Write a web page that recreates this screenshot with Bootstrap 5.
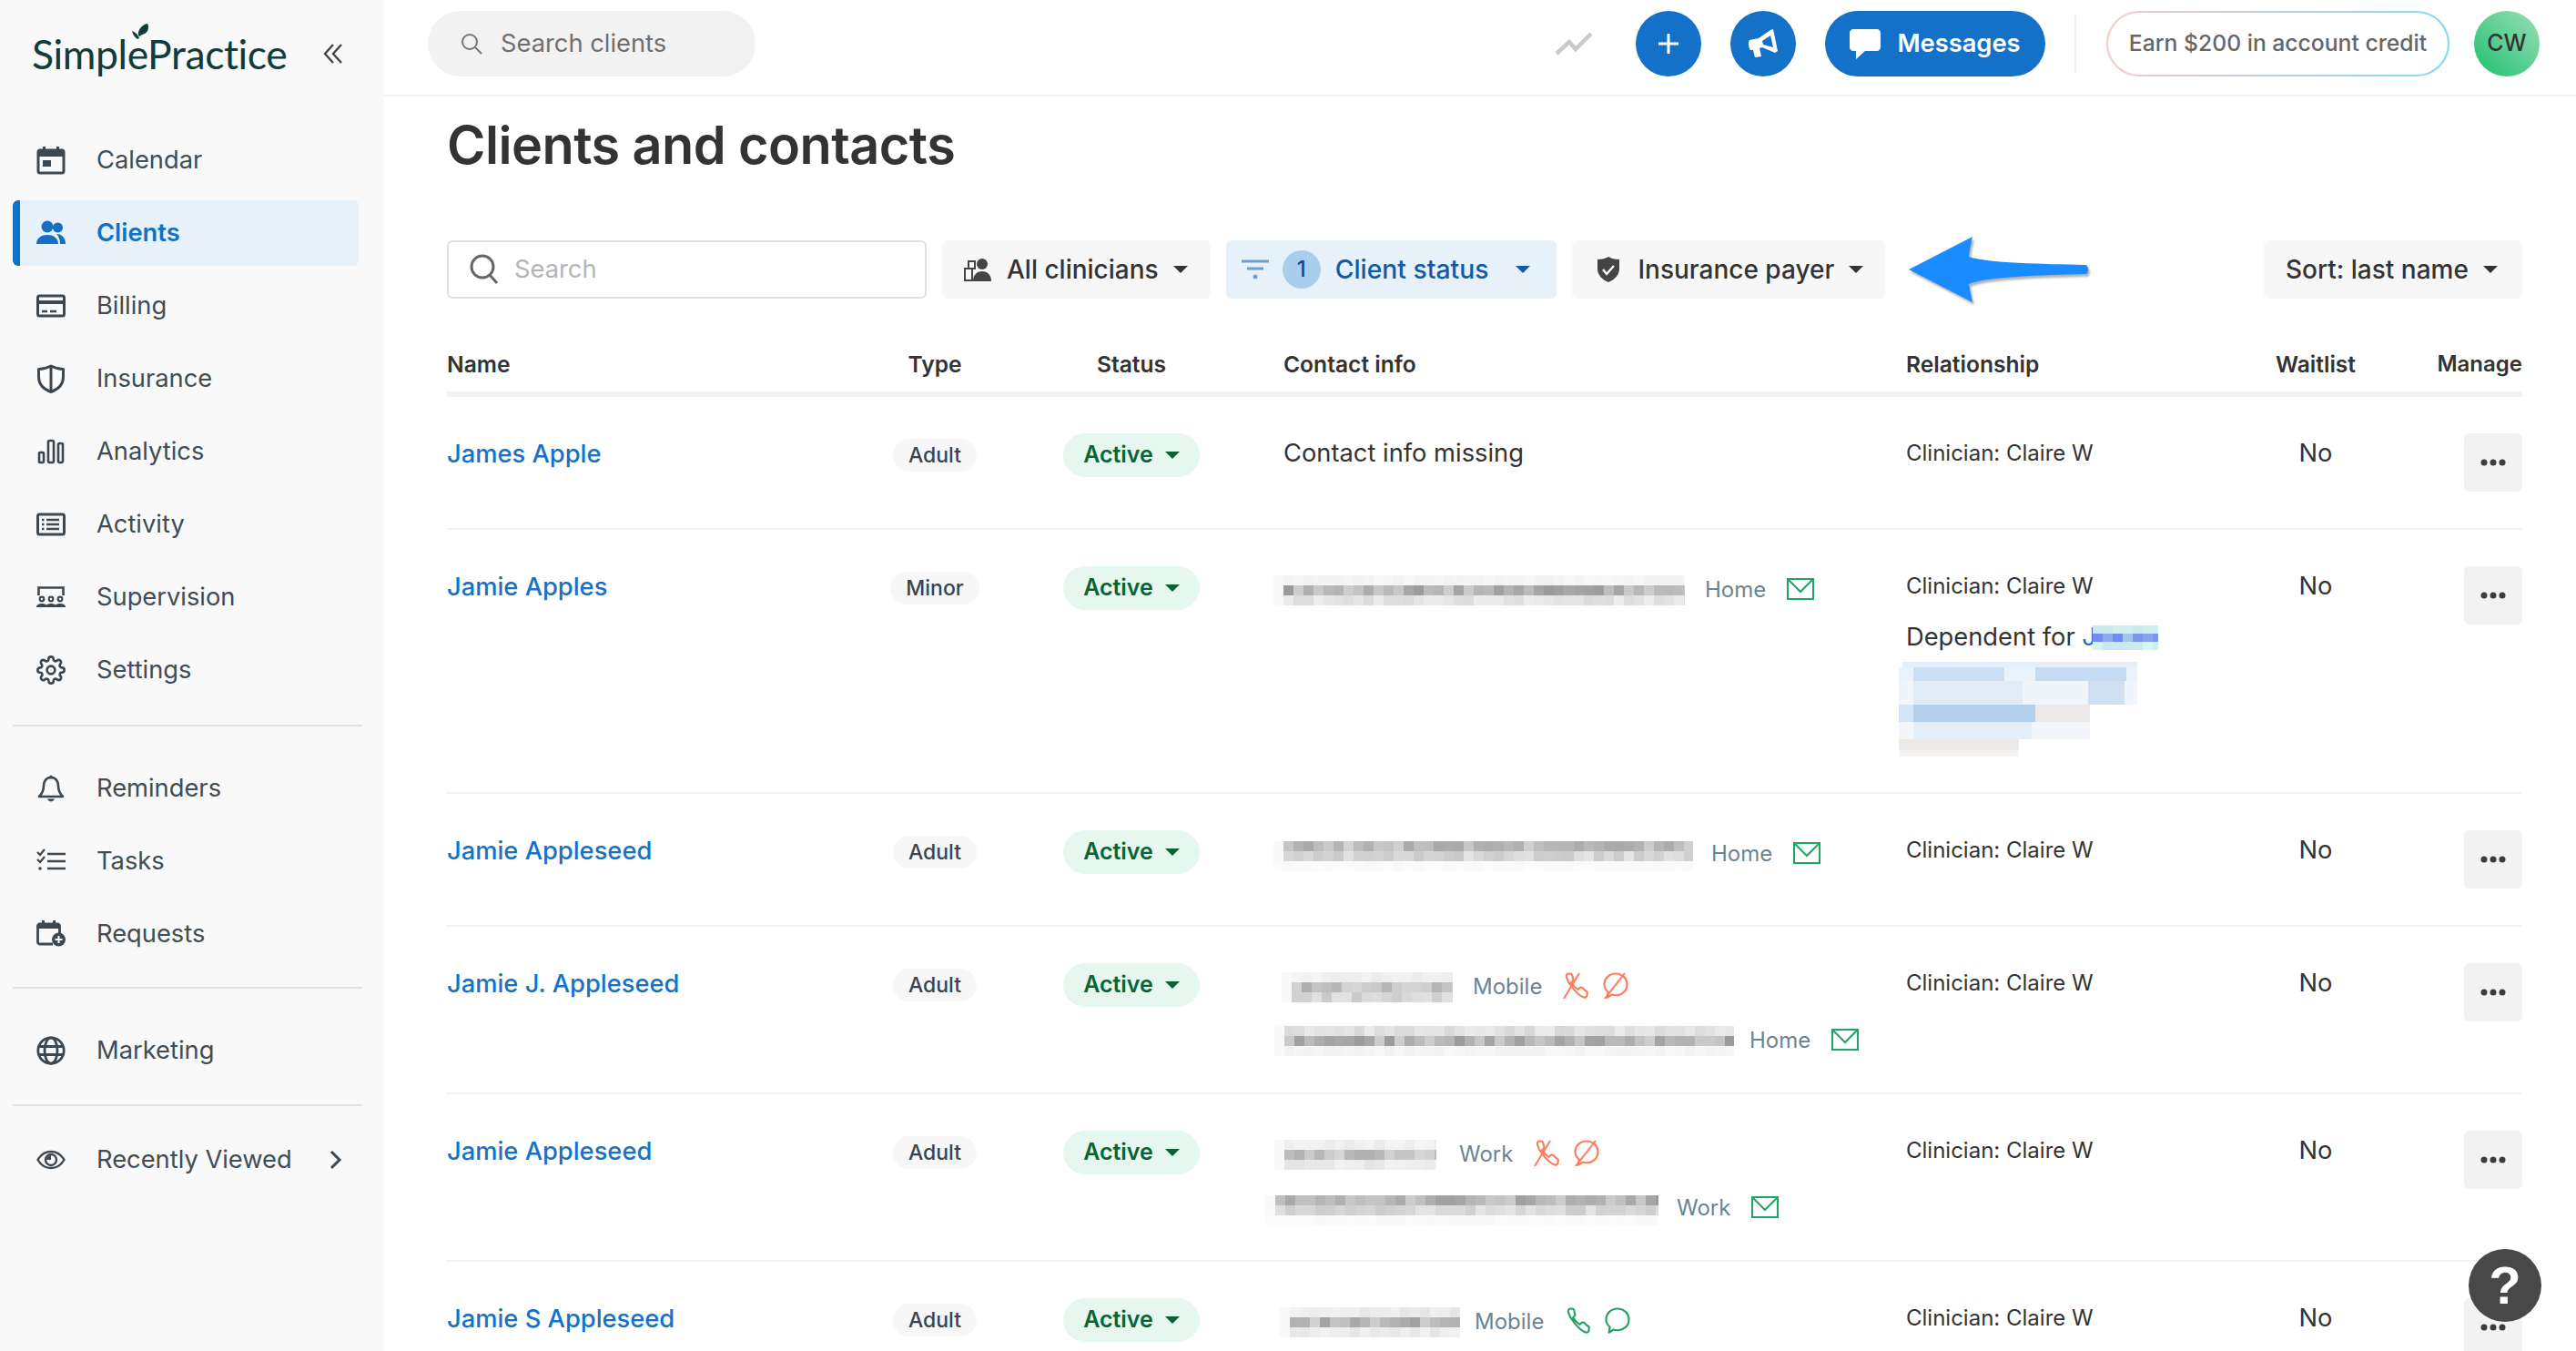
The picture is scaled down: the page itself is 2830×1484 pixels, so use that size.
<!DOCTYPE html>
<html lang="en">
<head>
<meta charset="utf-8">
<title>Clients and contacts</title>
<link href="https://cdn.jsdelivr.net/npm/bootstrap@5.3.0/dist/css/bootstrap.min.css" rel="stylesheet">
<style>
html,body{height:100%;overflow:hidden;background:#fff}
body{font-family:Inter,"Liberation Sans",sans-serif;color:#333;font-size:27.3px}
.shell{height:1484px}
.side{width:422px;flex:none;background:#f9f9f9;height:100%}
.brand{height:140px;padding:0 45px 22px 35px}
.brand-txt{font-family:Lato,sans-serif;font-size:44.5px;color:#123c3c;letter-spacing:-.4px;line-height:1;position:relative;font-weight:400}
.brand-leaf{position:absolute;left:110px;top:-11px;width:20px;height:20px}
.sidenav .nav-link{height:72px;margin:4px 28px 4px 14px;padding:0 0 0 18px;color:#414c54;display:flex;align-items:center;font-size:27.3px;border-left:8px solid transparent;border-radius:6px}
.sidenav .nav-link svg{width:32px;height:32px;flex:none;margin-right:34px;color:#3d474f}
.sidenav .nav-link.on{background:#e6f1fa;color:#1470c4;border-left-color:#1470c4;font-weight:600}
.sidenav .nav-link.on svg{color:#1470c4}
.sidenav .first{margin-top:0}
.rule{height:2px;background:#e2e2e2;margin:20px 24px 28px 14px}
.rule.mid{margin-top:18px;margin-bottom:28px}
.rule.tail{margin-bottom:19px;margin-top:19px}
.topbar{height:106px;border-bottom:2px solid #f2f2f2;padding:0 40px 8px 48px;flex:none}
.tsearch{width:360px;height:72px;background:#f2f2f2;border-radius:36px;padding-left:36px;color:#6f6f6f;font-size:27.3px}
.tsearch svg{width:24px;height:24px;margin-right:20px}
.round-b{width:72px;height:72px;border-radius:50%;background:#1471c8;color:#fff;padding:0;display:flex;align-items:center;justify-content:center;border:0}
.msg-b{height:72px;width:242px;border-radius:36px;background:#1471c8;color:#fff;font-size:27.3px;font-weight:600;border:0;padding:0;display:flex;align-items:center;justify-content:center;gap:18px}
.vr-line{width:2px;height:64px;background:#f0f0f0;margin:0 33px 0 32px}
.earn{height:72px;width:377px;border-radius:36px;border:2px solid transparent;background:linear-gradient(#fff,#fff) padding-box,linear-gradient(90deg,#f9c7ca,#7fd8f2) border-box;color:#666;font-size:24.7px;font-weight:500;padding:0;display:flex;align-items:center;justify-content:center}
.avatar{width:72px;height:72px;border-radius:50%;background:linear-gradient(45deg,#1fc06f,#9adfb8);font-size:25px;font-weight:500;color:#333;margin-left:27px}
.page{padding:0 59px 0 69px;overflow:hidden;flex:1}
.ttl{font-size:57.6px;font-weight:600;line-height:70px;margin:18px 0 70px;color:#333;letter-spacing:-.55px}
.filters{height:64px;gap:17px}
.fsearch{width:527px;height:64px;border:2px solid #e0e0e0;border-radius:6px;color:#b5b5b5;font-size:27.3px;padding-left:22px}
.fsearch svg{width:34px;height:34px;margin-right:16px;color:#666}
.fbtn{height:64px;background:#f7f7f7;border:0;border-radius:6px;font-size:28px;font-weight:500;color:#333;padding:0 24px;display:flex;align-items:center}
.fbtn.dropdown-toggle::after{margin-left:16px;vertical-align:0}
.fbtn svg{flex:none}
.fbtn.hot{background:#e6f1fa;color:#0f5ba6;padding:0 29px 0 16px;font-size:28.3px}
.cnt{width:42px;height:42px;border-radius:50%;background:#a9cdec;font-size:24px;color:#0f4f8f;margin:0 16px 0 14px;font-weight:500}
.arrow{width:200px;height:76px;margin:-6px 0 -6px 9px;filter:drop-shadow(2px 3px 1px rgba(0,0,0,.3))}
.fbtn.srt{padding:0 24px 0 24px;width:284px}
.grid{table-layout:fixed;width:2280px;margin:0;margin-top:42px;border-collapse:separate;border-spacing:0}
.grid th{font-size:24.6px;font-weight:600;color:#333;padding:0;height:66px;vertical-align:middle;border-bottom:6px solid #f2f2f2;background:none}
.grid th.text-end{font-size:24px}
.grid td{padding:40px 0;vertical-align:top;border-bottom:2px solid #f2f2f2;background:none;color:#333}
.grid td.ct{padding-bottom:37px;padding-left:18px}
.grid th.ct{padding-left:18px}
.who{display:block;font-size:27.3px;font-weight:500;line-height:46px;color:#1671c9;text-decoration:none}
.kind{background:#f7f7f7;color:#3a444c;font-size:23px;font-weight:500;border-radius:18px;height:36px;padding:0 17px;display:inline-flex;align-items:center;margin-top:6px}
.state{background:#e6f7ef;color:#0b6334;font-size:25px;font-weight:600;height:48px;width:150px;border-radius:24px;border:0;padding:0;display:inline-flex;align-items:center;justify-content:center}
.state.dropdown-toggle::after{margin-left:13px;border-top-width:8px;border-left-width:8px;border-right-width:8px}
.rel{font-size:24px;line-height:44px;color:#333}
.dep{font-size:27.3px;line-height:44px;margin-top:12px;white-space:nowrap}
.dep a{color:#1671c9;text-decoration:none}
.no{font-size:27.3px;line-height:44px}
.more{width:64px;height:64px;background:#f2f2f2;border:0;border-radius:6px;padding:0;display:inline-flex;align-items:center;justify-content:center}
.missing{font-size:27.3px;line-height:44px}
.cline{height:40px;margin-top:6px;white-space:nowrap}
.cline+.cline{margin-top:19px}
.lbl{font-size:24px;color:#6c8394;margin-left:22px}
.ic-g{color:#1fa463;width:30px;height:24px;margin:-2px 0 0 23px;flex:none}
.ph{width:30px;height:30px;flex:none;margin-top:-4px}
.ph.a{margin-left:22px}.ph.b{margin-left:14px}
.ok{color:#1fa463}.bad{color:#ff7a59}
.blurbox{display:block;flex:none}
.help{position:fixed;left:2712px;top:1372px;width:80px;height:80px;border-radius:50%;background:#484848;color:#fff;font:700 58px/80px "Liberation Sans",sans-serif;text-align:center;padding:0;border:0}
</style>
</head>
<body>
<svg width="0" height="0" class="position-absolute">
<defs>
<symbol id="i-cal" viewBox="0 0 32 32"><rect x="2" y="5" width="28" height="25" rx="2" fill="none" stroke="currentColor" stroke-width="3"/><rect x="2" y="5" width="28" height="7" fill="currentColor"/><rect x="7" y="1" width="3" height="6" fill="currentColor"/><rect x="22" y="1" width="3" height="6" fill="currentColor"/><rect x="7" y="16" width="9" height="7" fill="currentColor"/></symbol>
<symbol id="i-ppl" viewBox="0 0 32 32"><circle cx="12" cy="9" r="6.5" fill="currentColor"/><circle cx="23.5" cy="10" r="5.5" fill="currentColor"/><path d="M0 28c0-7 6-10 12-10s12 3 12 10z" fill="currentColor"/><path d="M22 17c6 0 10 4 10 11h-6c0-4-1-8-4-11z" fill="currentColor"/></symbol>
<symbol id="i-card" viewBox="0 0 32 32"><rect x="1.5" y="5" width="29" height="22" rx="2" fill="none" stroke="currentColor" stroke-width="3"/><rect x="1.5" y="10" width="29" height="4" fill="currentColor"/><path d="M6 22h6M15 22h7" stroke="currentColor" stroke-width="2.5"/></symbol>
<symbol id="i-shield" viewBox="0 0 32 32"><path d="M16 2C12 4 7 5.500 2.500 5.500V14C2.500 23 9 28 16 30.500C23 28 29.500 23 29.500 14V5.500C25 5.500 20 4 16 2Z" fill="none" stroke="currentColor" stroke-width="3" stroke-linejoin="round"/><path d="M16 2v28" stroke="currentColor" stroke-width="3"/></symbol>
<symbol id="i-bars" viewBox="0 0 32 32"><g fill="none" stroke="currentColor" stroke-width="2.6"><rect x="3" y="17" width="5" height="11" rx="1"/><rect x="13" y="4" width="6" height="24" rx="1.500"/><rect x="24" y="7" width="5" height="21" rx="1.500"/></g></symbol>
<symbol id="i-list" viewBox="0 0 32 32"><rect x="1.500" y="5" width="29" height="22" rx="2" fill="none" stroke="currentColor" stroke-width="3"/><path d="M11 11h14M11 16h14M11 21h14" stroke="currentColor" stroke-width="2.5"/><path d="M6 11h2.500M6 16h2.500M6 21h2.500" stroke="currentColor" stroke-width="2.5"/></symbol>
<symbol id="i-sup" viewBox="0 0 32 32"><path d="M2.500 14V5.500h27V14" fill="none" stroke="currentColor" stroke-width="2.6"/><g fill="none" stroke="currentColor" stroke-width="2.2"><circle cx="6" cy="18" r="2.300"/><circle cx="16" cy="18" r="2.300"/><circle cx="26" cy="18" r="2.300"/></g><path d="M0 27c0-3 3-4 6-4s6 1 6 4zM10 27c0-3 3-4 6-4s6 1 6 4zM20 27c0-3 3-4 6-4s6 1 6 4z" fill="currentColor"/></symbol>
<symbol id="i-gear" viewBox="0 0 24 24"><path fill="none" stroke="currentColor" stroke-width="2" d="M19.400 15a1.650 1.650 0 0 0 .33 1.820l.06.06a2 2 0 0 1 0 2.830 2 2 0 0 1-2.830 0l-.06-.06a1.650 1.650 0 0 0-1.820-.33 1.650 1.650 0 0 0-1 1.510V21a2 2 0 0 1-2 2 2 2 0 0 1-2-2v-.09A1.650 1.650 0 0 0 9 19.400a1.650 1.650 0 0 0-1.820.33l-.06.06a2 2 0 0 1-2.830 0 2 2 0 0 1 0-2.830l.06-.06a1.650 1.650 0 0 0 .33-1.820 1.650 1.650 0 0 0-1.510-1H3a2 2 0 0 1-2-2 2 2 0 0 1 2-2h.09A1.650 1.650 0 0 0 4.600 9a1.650 1.650 0 0 0-.33-1.820l-.06-.06a2 2 0 0 1 0-2.830 2 2 0 0 1 2.830 0l.06.06a1.650 1.650 0 0 0 1.820.33H9a1.650 1.650 0 0 0 1-1.510V3a2 2 0 0 1 2-2 2 2 0 0 1 2 2v.09a1.650 1.650 0 0 0 1 1.510 1.650 1.650 0 0 0 1.820-.33l.06-.06a2 2 0 0 1 2.830 0 2 2 0 0 1 0 2.830l-.06.06a1.650 1.650 0 0 0-.33 1.820V9a1.650 1.650 0 0 0 1.510 1H21a2 2 0 0 1 2 2 2 2 0 0 1-2 2h-.09a1.650 1.650 0 0 0-1.510 1z"/><circle cx="12" cy="12" r="3.300" fill="none" stroke="currentColor" stroke-width="2"/></symbol>
<symbol id="i-bell" viewBox="0 0 32 32"><path d="M16 4c-5 0-8 4-8 9 0 6-2 9-5 12h26c-3-3-5-6-5-12 0-5-3-9-8-9z" fill="none" stroke="currentColor" stroke-width="2.6" stroke-linejoin="round"/><path d="M12 27.500c1 2 2.500 3 4 3s3-1 4-3z" fill="currentColor"/><rect x="14.500" y="1.500" width="3" height="4" rx="1.500" fill="currentColor"/></symbol>
<symbol id="i-tasks" viewBox="0 0 32 32"><path d="M12 8h20M12 16h20M12 24h20" stroke="currentColor" stroke-width="2.4"/><path d="M1 6l3 3 5-6M1 14l3 3 5-6" fill="none" stroke="currentColor" stroke-width="2.2"/><circle cx="4" cy="24" r="1.800" fill="currentColor"/></symbol>
<symbol id="i-calp" viewBox="0 0 32 32"><path d="M18 27H3.500c-1 0-2-1-2-2V7c0-1 1-2 2-2h20c1 0 2 1 2 2v9" fill="none" stroke="currentColor" stroke-width="2.8"/><rect x="2" y="5" width="23" height="5" fill="currentColor"/><rect x="6" y="1" width="3" height="5" fill="currentColor"/><rect x="18" y="1" width="3" height="5" fill="currentColor"/><circle cx="24.500" cy="22" r="7.500" fill="currentColor"/><path d="M24.500 18v8M20.500 22h8" stroke="#fff" stroke-width="2"/></symbol>
<symbol id="i-globe" viewBox="0 0 32 32"><g fill="none" stroke="currentColor" stroke-width="2.8"><circle cx="16" cy="16" r="14.200"/><ellipse cx="16" cy="16" rx="7" ry="14.200"/><path d="M2 11.500h28M2 20.500h28"/></g></symbol>
<symbol id="i-eye" viewBox="0 0 32 32"><path d="M1.500 16C5 10 10 7 16 7s11 3 14.500 9C27 22 22 25 16 25S5 22 1.500 16Z" fill="none" stroke="currentColor" stroke-width="2.4"/><circle cx="16" cy="16" r="6" fill="none" stroke="currentColor" stroke-width="2.4"/><path d="M16 11a5 5 0 0 0-5 5h5z" fill="currentColor"/></symbol>
<symbol id="i-mail" viewBox="0 0 30 24"><path d="M1 1h28v22H1zM1 1l14 14L29 1" fill="none" stroke="currentColor" stroke-width="2"/></symbol>
<symbol id="i-phone" viewBox="0 0 24 24"><path fill="none" stroke="currentColor" stroke-width="1.700" d="M22 19.900v1a2 2 0 0 1-2.180 2c-2 -.2 -3.500-1-6.630-4.070-2.500-2.500-5-5.500-7-8.600C5 8 4 6 3.900 4.200A2 2 0 0 1 6.100 2h1a2 2 0 0 1 2 1.720c.2 1 .3 2 .7 2.810a2 2 0 0 1-.45 2.110L8.090 9.910a16 16 0 0 0 6 6l1.270-1.270a2 2 0 0 1 2.110-.45c1 .4 1.800 1.500 3 2.700A2 2 0 0 1 22 19.900z"/></symbol>
<symbol id="i-chat" viewBox="0 0 24 24"><path fill="none" stroke="currentColor" stroke-width="1.700" stroke-linejoin="round" d="M12 2c5.500 0 10 4 10 9.500S17.500 21 12 21c-1.500 0-2.500-.2-3.500-.6L4.500 23l.8-5C3.300 16.300 2 14 2 11.500 2 6 6.500 2 12 2z"/></symbol>
</defs>
</svg>

<div class="shell d-flex">
<aside class="side d-flex flex-column">
  <div class="brand d-flex align-items-center justify-content-between">
    <span class="brand-txt">SimplePractice<svg class="brand-leaf" viewBox="0 0 20 20"><path d="M7 13C6 7 11 1 17 0c2 3 1 9-3 11-2 1-4 1-5 3z" fill="#123c3c"/><path d="M0 8c3 1 6 3 8 8l-2 1C3 15 1 12 0 8z" fill="#123c3c"/></svg></span>
    <svg width="22" height="24" viewBox="0 0 22 24"><path d="M11 2L2 12l9 10M20 2l-9 10 9 10" fill="none" stroke="#444" stroke-width="2.400"/></svg>
  </div>
  <nav class="sidenav nav flex-column">
    <a class="nav-link first" href="#"><svg><use href="#i-cal"/></svg>Calendar</a>
    <a class="nav-link on" href="#"><svg><use href="#i-ppl"/></svg>Clients</a>
    <a class="nav-link" href="#"><svg><use href="#i-card"/></svg>Billing</a>
    <a class="nav-link" href="#"><svg><use href="#i-shield"/></svg>Insurance</a>
    <a class="nav-link" href="#"><svg><use href="#i-bars"/></svg>Analytics</a>
    <a class="nav-link" href="#"><svg><use href="#i-list"/></svg>Activity</a>
    <a class="nav-link" href="#"><svg><use href="#i-sup"/></svg>Supervision</a>
    <a class="nav-link" href="#"><svg><use href="#i-gear"/></svg>Settings</a>
    <div class="rule"></div>
    <a class="nav-link" href="#"><svg><use href="#i-bell"/></svg>Reminders</a>
    <a class="nav-link" href="#"><svg><use href="#i-tasks"/></svg>Tasks</a>
    <a class="nav-link" href="#"><svg><use href="#i-calp"/></svg>Requests</a>
    <div class="rule mid"></div>
    <a class="nav-link" href="#"><svg><use href="#i-globe"/></svg>Marketing</a>
    <div class="rule tail"></div>
    <a class="nav-link" href="#"><svg><use href="#i-eye"/></svg><span class="flex-grow-1">Recently Viewed</span><svg style="width:14px;height:22px;margin-right:18px" viewBox="0 0 14 22"><path d="M2 2l9 9-9 9" fill="none" stroke="currentColor" stroke-width="3"/></svg></a>
  </nav>
</aside>

<main class="flex-grow-1 d-flex flex-column" style="min-width:0">
  <header class="topbar d-flex align-items-center">
    <div class="tsearch d-flex align-items-center"><svg viewBox="0 0 24 24"><circle cx="10" cy="10" r="8" fill="none" stroke="#777" stroke-width="2"/><path d="M16 16l7 7" stroke="#777" stroke-width="2"/></svg>Search clients</div>
    <svg class="ms-auto" width="42" height="26" viewBox="0 0 42 26" style="margin-right:47px"><path d="M2 24L16 11l7 8L40 2" fill="none" stroke="#c9c9c9" stroke-width="4.500"/></svg>
    <button class="btn round-b" aria-label="Add"><svg width="22" height="22" viewBox="0 0 22 22"><path d="M11 0v22M0 11h22" stroke="#fff" stroke-width="3"/></svg></button>
    <button class="btn round-b" style="margin-left:32px" aria-label="News"><svg width="34" height="32" viewBox="0 0 34 32"><path fill-rule="evenodd" fill="#fff" d="M2 12L12 10L25 1L28 0L33 24L30 26L16 20L13 21L15 30L8 31L6 23L3 23C1 20 0 15 2 12ZM16 13L25 7L28 20L17 17Z"/></svg></button>
    <button class="btn msg-b" style="margin-left:32px"><svg width="34" height="33" viewBox="0 0 34 33"><path d="M4 0h26c2 0 4 2 4 4v16c0 2-2 4-4 4H17L7 33V24H4c-2 0-4-2-4-4V4c0-2 2-4 4-4z" fill="#fff"/></svg>Messages</button>
    <span class="vr-line"></span>
    <button class="btn earn">Earn $200 in account credit</button>
    <div class="avatar d-flex align-items-center justify-content-center">CW</div>
  </header>

  <section class="page">
    <h1 class="ttl">Clients and contacts</h1>
    <div class="filters d-flex align-items-center">
      <div class="fsearch d-flex align-items-center"><svg viewBox="0 0 34 34"><circle cx="15" cy="14" r="12" fill="none" stroke="currentColor" stroke-width="3"/><path d="M23 23l8 9" stroke="currentColor" stroke-width="3"/></svg>Search</div>
      <button class="btn fbtn dropdown-toggle" style="padding-right:25px"><svg width="30" height="26" viewBox="0 0 30 26" style="margin-right:17px"><circle cx="20" cy="7" r="6" fill="#444"/><path d="M10 26c0-7 4-11 10-11s10 4 10 11z" fill="#444"/><path d="M1 12h8v13H1zM5 4h7v8H5z" fill="none" stroke="#444" stroke-width="2"/></svg>All clinicians</button>
      <button class="btn fbtn hot dropdown-toggle"><svg width="32" height="24" viewBox="0 0 32 24"><path d="M1 3h30M7 11h18" stroke="#6f9fce" stroke-width="3"/><circle cx="16" cy="20" r="2.500" fill="#6f9fce"/></svg><span class="cnt d-flex align-items-center justify-content-center">1</span>Client status<span style="width:14px"></span></button>
      <button class="btn fbtn dropdown-toggle"><svg width="24" height="28" viewBox="0 0 24 28" style="margin-right:20px;margin-left:4px"><path d="M12 0C9 2 5 3 0 3v10c0 7 5 12 12 15 7-3 12-8 12-15V3c-5 0-9-1-12-3z" fill="#444"/><path d="M6 14l4 5 8-9" fill="none" stroke="#fff" stroke-width="2.400"/></svg>Insurance payer</button>
      <svg class="arrow" viewBox="0 0 200 76"><path d="M0 38L70 2 C68 10 67 16 66 24 C85 31 150 32 194 33 C198 33 198 43 194 43 C150 44 85 46 66 54 C67 60 68 66 70 74Z" fill="#1a8cff"/></svg>
      <button class="btn fbtn srt dropdown-toggle ms-auto">Sort: last name</button>
    </div>

    <table class="table grid">
      <colgroup><col style="width:469px"><col style="width:134px"><col style="width:298px"><col style="width:702px"><col style="width:366px"><col style="width:168px"><col style="width:143px"></colgroup>
      <thead><tr><th>Name</th><th class="text-center">Type</th><th class="text-center">Status</th><th class="ct">Contact info</th><th>Relationship</th><th class="text-center">Waitlist</th><th class="text-end">Manage</th></tr></thead>
      <tbody id="rows">
        <tr>
          <td><a class="who" href="#">James Apple</a></td>
          <td class="text-center"><span class="badge kind">Adult</span></td>
          <td class="text-center"><button class="btn state dropdown-toggle">Active</button></td>
          <td class="ct"><div class="missing">Contact info missing</div></td>
          <td><div class="rel">Clinician: Claire W</div></td>
          <td class="text-center no">No</td>
          <td class="text-end"><button class="btn more" aria-label="More"><svg width="28" height="8" viewBox="0 0 28 8"><circle cx="4" cy="4" r="3.500" fill="#3d3d3d"/><circle cx="14" cy="4" r="3.500" fill="#3d3d3d"/><circle cx="24" cy="4" r="3.500" fill="#3d3d3d"/></svg></button></td>
        </tr>
        <tr>
          <td><a class="who" href="#">Jamie Apples</a></td>
          <td class="text-center"><span class="badge kind">Minor</span></td>
          <td class="text-center"><button class="btn state dropdown-toggle">Active</button></td>
          <td class="ct"><div class="cline d-flex align-items-center"><svg class="blurbox mz" data-w="452" data-x="-11" data-p="245,180,228" data-s="3"></svg><span class="lbl">Home</span><svg class="ic-g"><use href="#i-mail"/></svg></div></td>
          <td style="padding-bottom:39px"><div class="rel">Clinician: Claire W</div>
            <div class="dep d-flex align-items-center">Dependent for&nbsp;<a href="#">J</a><svg class="blurbox mz" data-w="72" data-p="232,165,232" data-h="9" data-b="1" data-s="8" data-x="-4"></svg></div>
            <svg class="blurbox" width="262" height="104" viewBox="0 0 262 104" style="margin:5px 0 0 -8px">
              <rect width="262" height="6" x="4" fill="#e4effb"/><rect x="0" y="6" width="262" height="15" fill="#eaf2fb"/><rect x="16" y="6" width="100" height="15" fill="#c8dff5"/><rect x="150" y="6" width="100" height="15" fill="#c3dbf3"/>
              <rect x="0" y="21" width="262" height="26" fill="#f0f5fb"/><rect x="16" y="21" width="120" height="26" fill="#e2ecf7"/><rect x="208" y="21" width="40" height="26" fill="#cfe0f3"/>
              <rect x="0" y="47" width="150" height="19" fill="#b2cfec"/><rect x="0" y="47" width="16" height="19" fill="#d5e5f5"/><rect x="150" y="47" width="60" height="19" fill="#ebe9e7"/>
              <rect x="0" y="66" width="210" height="19" fill="#f2f6fa"/><rect x="16" y="66" width="130" height="19" fill="#e4eff9"/>
              <rect x="0" y="85" width="132" height="12" fill="#ebe8e6"/><rect x="0" y="97" width="132" height="7" fill="#f4f4f4"/>
            </svg>
          </td>
          <td class="text-center no">No</td>
          <td class="text-end"><button class="btn more" aria-label="More"><svg width="28" height="8" viewBox="0 0 28 8"><circle cx="4" cy="4" r="3.500" fill="#3d3d3d"/><circle cx="14" cy="4" r="3.500" fill="#3d3d3d"/><circle cx="24" cy="4" r="3.500" fill="#3d3d3d"/></svg></button></td>
        </tr>
        <tr>
          <td><a class="who" href="#">Jamie Appleseed</a></td>
          <td class="text-center"><span class="badge kind">Adult</span></td>
          <td class="text-center"><button class="btn state dropdown-toggle">Active</button></td>
          <td class="ct"><div class="cline d-flex align-items-center"><svg class="blurbox mz" data-w="461" data-x="-11" data-y="4" data-p="190,215,250" data-s="5"></svg><span class="lbl" style="margin-left:20px">Home</span><svg class="ic-g"><use href="#i-mail"/></svg></div></td>
          <td><div class="rel">Clinician: Claire W</div></td>
          <td class="text-center no">No</td>
          <td class="text-end"><button class="btn more" aria-label="More"><svg width="28" height="8" viewBox="0 0 28 8"><circle cx="4" cy="4" r="3.500" fill="#3d3d3d"/><circle cx="14" cy="4" r="3.500" fill="#3d3d3d"/><circle cx="24" cy="4" r="3.500" fill="#3d3d3d"/></svg></button></td>
        </tr>
        <tr>
          <td><a class="who" href="#">Jamie J. Appleseed</a></td>
          <td class="text-center"><span class="badge kind">Adult</span></td>
          <td class="text-center"><button class="btn state dropdown-toggle">Active</button></td>
          <td class="ct">
            <div class="cline d-flex align-items-center"><svg class="blurbox mz" data-w="188" data-x="-2" data-p="240,195,215" data-s="7"></svg><span class="lbl">Mobile</span><svg class="ph a bad"><use href="#i-phone"/><path d="M2 30L19 2" stroke="currentColor" stroke-width="2"/></svg><svg class="ph b bad"><use href="#i-chat"/><path d="M3 30L25 2" stroke="currentColor" stroke-width="2"/></svg></div>
            <div class="cline d-flex align-items-center"><svg class="blurbox mz" data-w="505" data-x="-10" data-p="225,180,245" data-s="9"></svg><span class="lbl" style="margin-left:17px">Home</span><svg class="ic-g"><use href="#i-mail"/></svg></div>
          </td>
          <td><div class="rel">Clinician: Claire W</div></td>
          <td class="text-center no">No</td>
          <td class="text-end"><button class="btn more" aria-label="More"><svg width="28" height="8" viewBox="0 0 28 8"><circle cx="4" cy="4" r="3.500" fill="#3d3d3d"/><circle cx="14" cy="4" r="3.500" fill="#3d3d3d"/><circle cx="24" cy="4" r="3.500" fill="#3d3d3d"/></svg></button></td>
        </tr>
        <tr>
          <td><a class="who" href="#">Jamie Appleseed</a></td>
          <td class="text-center"><span class="badge kind">Adult</span></td>
          <td class="text-center"><button class="btn state dropdown-toggle">Active</button></td>
          <td class="ct">
            <div class="cline d-flex align-items-center"><svg class="blurbox mz" data-w="178" data-x="-10" data-p="240,195,235" data-s="11"></svg><span class="lbl" style="margin-left:25px">Work</span><svg class="ph a bad"><use href="#i-phone"/><path d="M2 30L19 2" stroke="currentColor" stroke-width="2"/></svg><svg class="ph b bad"><use href="#i-chat"/><path d="M3 30L25 2" stroke="currentColor" stroke-width="2"/></svg></div>
            <div class="cline d-flex align-items-center"><svg class="blurbox mz" data-w="432" data-x="-20" data-y="4" data-p="180,215,250" data-s="13"></svg><span class="lbl" style="margin-left:20px">Work</span><svg class="ic-g"><use href="#i-mail"/></svg></div>
          </td>
          <td><div class="rel">Clinician: Claire W</div></td>
          <td class="text-center no">No</td>
          <td class="text-end"><button class="btn more" aria-label="More"><svg width="28" height="8" viewBox="0 0 28 8"><circle cx="4" cy="4" r="3.500" fill="#3d3d3d"/><circle cx="14" cy="4" r="3.500" fill="#3d3d3d"/><circle cx="24" cy="4" r="3.500" fill="#3d3d3d"/></svg></button></td>
        </tr>
        <tr>
          <td><a class="who" href="#">Jamie S Appleseed</a></td>
          <td class="text-center"><span class="badge kind">Adult</span></td>
          <td class="text-center"><button class="btn state dropdown-toggle">Active</button></td>
          <td class="ct"><div class="cline d-flex align-items-center"><svg class="blurbox mz" data-w="198" data-x="-4" data-p="235,185,235" data-s="15"></svg><span class="lbl" style="margin-left:16px">Mobile</span><svg class="ph a ok"><use href="#i-phone"/></svg><svg class="ph b ok"><use href="#i-chat"/></svg></div></td>
          <td><div class="rel">Clinician: Claire W</div></td>
          <td class="text-center no">No</td>
          <td class="text-end"><button class="btn more" aria-label="More"><svg width="28" height="8" viewBox="0 0 28 8"><circle cx="4" cy="4" r="3.500" fill="#3d3d3d"/><circle cx="14" cy="4" r="3.500" fill="#3d3d3d"/><circle cx="24" cy="4" r="3.500" fill="#3d3d3d"/></svg></button></td>
        </tr>
      </tbody>
    </table>
  </section>
</main>
</div>
<button class="help" aria-label="Help">?</button>

<script src="https://cdn.jsdelivr.net/npm/bootstrap@5.3.0/dist/js/bootstrap.bundle.min.js"></script>
<script>
document.querySelectorAll('svg.mz').forEach(function(el){
  var w=+el.dataset.w,p=el.dataset.p.split(',').map(Number),ch=+(el.dataset.h||11),s=+el.dataset.s,cw=11,out='',H=ch*p.length;
  var r=function(){s=(s*16807+11)%2147483647;return s/2147483647};
  el.setAttribute('width',w);el.setAttribute('height',H);el.setAttribute('viewBox','0 0 '+w+' '+H);
  if(el.dataset.x)el.style.marginLeft=el.dataset.x+'px';
  if(el.dataset.y)el.style.marginTop=el.dataset.y+'px';
  for(var y=0;y<p.length;y++){for(var x=0;x<w;x+=cw){
    var j=r();var v=Math.min(252,Math.round(p[y]+(j-.5)*(255-p[y])*.7));
    if(x===0&&!el.dataset.b)v=Math.max(v,249);
    var c=el.dataset.b?('rgb('+(v-25)+','+(v+8)+',238)'):('rgb('+v+','+v+','+v+')');
    out+='<rect x="'+x+'" y="'+y*ch+'" width="'+(cw+.5)+'" height="'+(ch+.5)+'" fill="'+c+'"/>';
  }}
  el.innerHTML=out;
});
</script>
</body>
</html>
